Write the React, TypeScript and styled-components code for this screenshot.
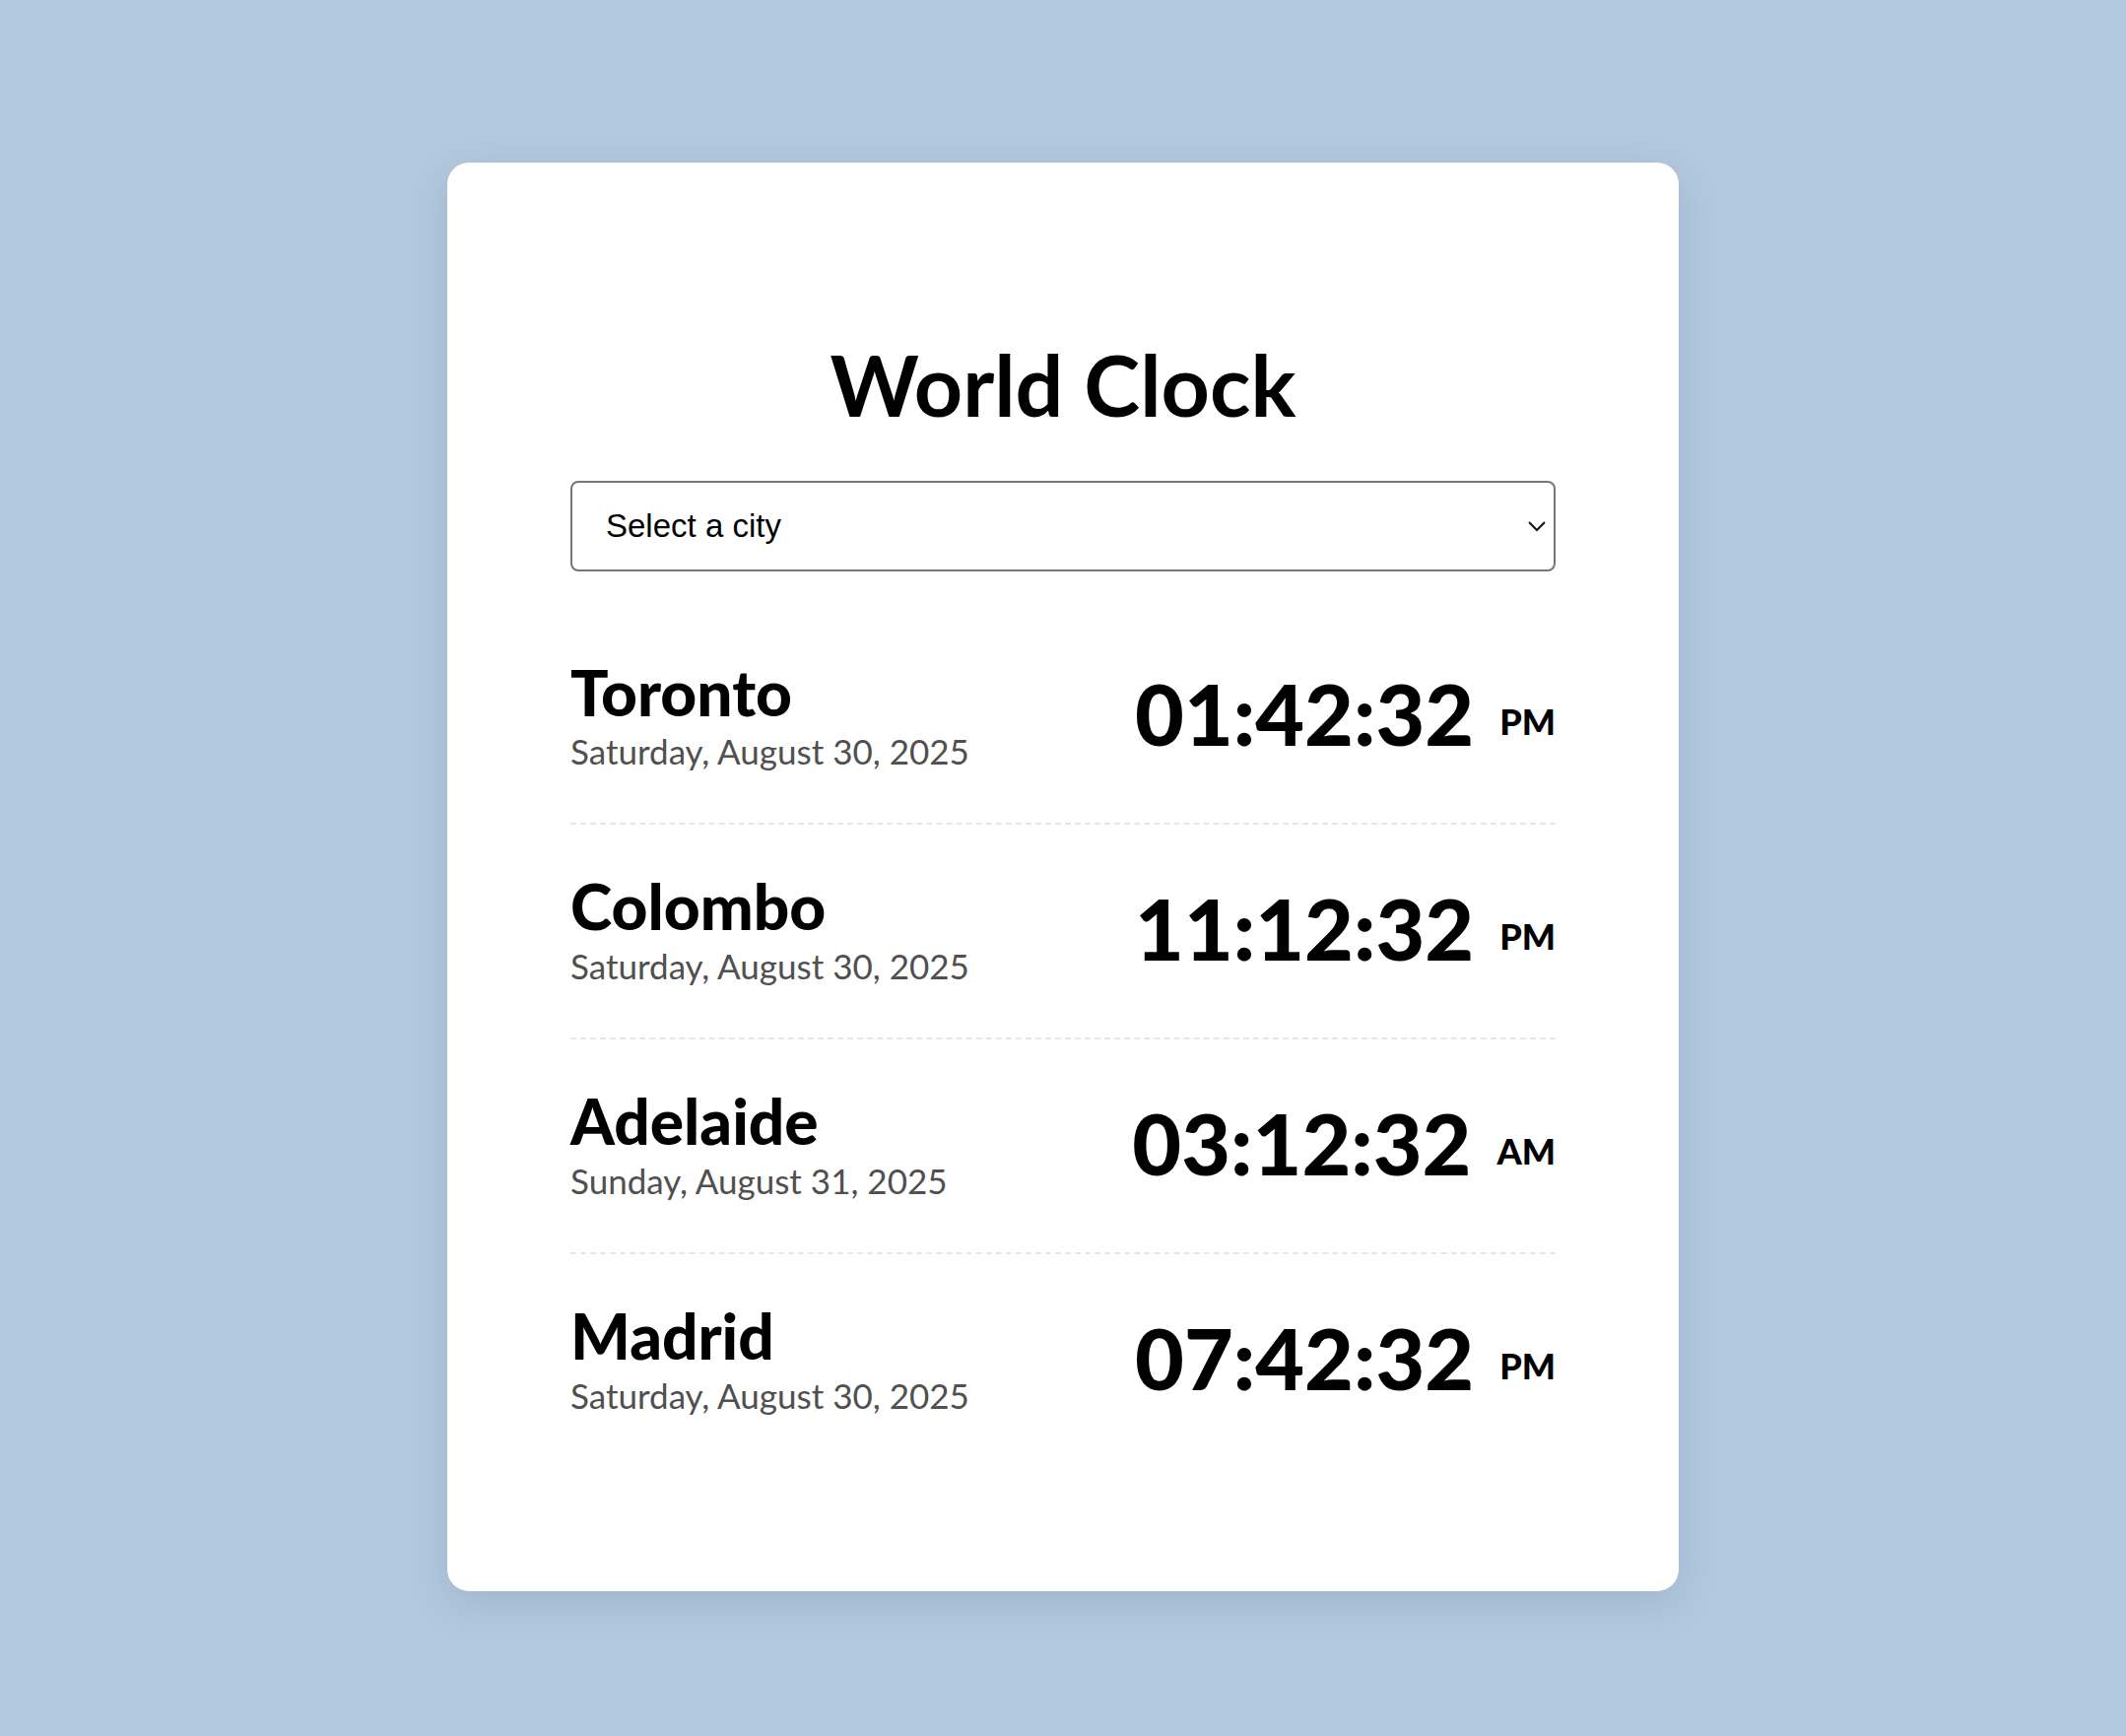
import * as React from 'react';
import styled, { createGlobalStyle } from 'styled-components';

const GlobalStyle = createGlobalStyle`
    html, body {
        margin: 0;
        padding: 0;
        background: #b3c9de;
    }
`;

const Page = styled.div`
    min-height: 100vh;
    display: flex;
    align-items: center;
    justify-content: center;
    padding-top: 18px;
    box-sizing: border-box;
    font-family: Lato, "Open Sans", sans-serif;
`;

const Card = styled.div`
    width: 1250px;
    box-sizing: border-box;
    padding: 125px 125px 126px;
    background: #ffffff;
    border-radius: 22px;
    box-shadow: 0 12px 44px rgba(60, 90, 120, 0.18);
`;

const Title = styled.h1`
    margin: 48px 0 46px;
    font-size: 86px;
    line-height: 1.2;
    font-weight: 700;
    text-align: center;
    color: #000;
`;

const SelectWrap = styled.div`
    position: relative;
`;

const CitySelect = styled.select`
    appearance: none;
    width: 100%;
    height: 92px;
    box-sizing: border-box;
    padding: 0 60px 0 34px;
    border: 2px solid #767676;
    border-radius: 8px;
    background: #fff;
    font-family: "Liberation Sans", Arial, sans-serif;
    font-size: 33px;
    color: #000;
`;

// chevron sits over the native select, like the browser's own arrow
const Chevron = styled.svg`
    position: absolute;
    right: 8px;
    top: 50%;
    width: 22px;
    height: 12px;
    margin-top: -6px;
    pointer-events: none;
`;

const List = styled.div`
    margin-top: 40px;
`;

const Row = styled.div<{ $last?: boolean }>`
    display: flex;
    flex-direction: row;
    align-items: center;
    justify-content: space-between;
    padding: 45px 0 52px;
    border-bottom: ${p => (p.$last ? 'none' : '2px dashed #e6e6e6')};
`;

const Place = styled.div`
    display: flex;
    flex-direction: column;
`;

const CityName = styled.div`
    font-size: 64px;
    font-weight: 900;
    line-height: 1.2;
    color: #000;
`;

const DateText = styled.div`
    font-size: 35px;
    font-weight: 400;
    line-height: 1.2;
    color: #505050;
`;

const Time = styled.div`
    font-size: 86px;
    font-weight: 900;
    line-height: 1.2;
    color: #000;
    white-space: nowrap;
`;

const Meridiem = styled.span`
    margin-left: 26px;
    font-size: 36px;
    font-weight: 900;
    vertical-align: 11px;
`;

interface Clock {
    city: string;
    date: string;
    time: string;
    meridiem: string;
};

const clocks: Clock[] = [
    { city: 'Toronto', date: 'Saturday, August 30, 2025', time: '01:42:32', meridiem: 'PM' },
    { city: 'Colombo', date: 'Saturday, August 30, 2025', time: '11:12:32', meridiem: 'PM' },
    { city: 'Adelaide', date: 'Sunday, August 31, 2025', time: '03:12:32', meridiem: 'AM' },
    { city: 'Madrid', date: 'Saturday, August 30, 2025', time: '07:42:32', meridiem: 'PM' },
];

export default function App() {
    return (
        <Page>
            <GlobalStyle />
            <Card>
                <Title>World Clock</Title>
                <SelectWrap>
                    <CitySelect defaultValue="">
                        <option value="">Select a city</option>
                        {clocks.map(c => (
                            <option key={c.city} value={c.city}>{c.city}</option>
                        ))}
                    </CitySelect>
                    <Chevron viewBox="0 0 22 12">
                        <path d="M3 2 L11 10 L19 2" fill="none" stroke="#111" strokeWidth="2" />
                    </Chevron>
                </SelectWrap>
                <List>
                    {clocks.map((c, i) => (
                        <Row key={c.city} $last={i === clocks.length - 1}>
                            <Place>
                                <CityName>{c.city}</CityName>
                                <DateText>{c.date}</DateText>
                            </Place>
                            <Time>
                                {c.time}
                                <Meridiem>{c.meridiem}</Meridiem>
                            </Time>
                        </Row>
                    ))}
                </List>
            </Card>
        </Page>
    );
}
